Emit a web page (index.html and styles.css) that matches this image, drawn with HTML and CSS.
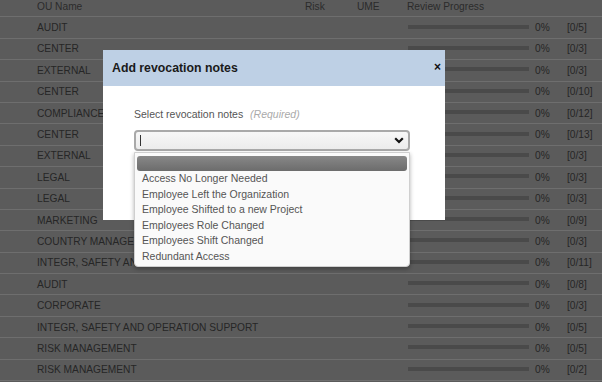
FILE: index.html
```html
<!DOCTYPE html>
<html>
<head>
<meta charset="utf-8">
<link rel="stylesheet" href="styles.css">
</head>
<body>
<div class="page">
  <div class="table">
    <div class="row head"><span>OU Name</span><span>Risk</span><span>UME</span><span>Review Progress</span><span></span><span></span></div>
    <div class="row"><span>AUDIT</span><span></span><span></span><span class="bar"></span><span>0%</span><span>[0/5]</span></div>
    <div class="row"><span>CENTER</span><span></span><span></span><span class="bar"></span><span>0%</span><span>[0/3]</span></div>
    <div class="row"><span>EXTERNAL</span><span></span><span></span><span class="bar"></span><span>0%</span><span>[0/3]</span></div>
    <div class="row"><span>CENTER</span><span></span><span></span><span class="bar"></span><span>0%</span><span>[0/10]</span></div>
    <div class="row"><span>COMPLIANCE</span><span></span><span></span><span class="bar"></span><span>0%</span><span>[0/12]</span></div>
    <div class="row"><span>CENTER</span><span></span><span></span><span class="bar"></span><span>0%</span><span>[0/13]</span></div>
    <div class="row"><span>EXTERNAL</span><span></span><span></span><span class="bar"></span><span>0%</span><span>[0/3]</span></div>
    <div class="row"><span>LEGAL</span><span></span><span></span><span class="bar"></span><span>0%</span><span>[0/3]</span></div>
    <div class="row"><span>LEGAL</span><span></span><span></span><span class="bar"></span><span>0%</span><span>[0/3]</span></div>
    <div class="row"><span>MARKETING</span><span></span><span></span><span class="bar"></span><span>0%</span><span>[0/9]</span></div>
    <div class="row"><span>COUNTRY MANAGEMENT</span><span></span><span></span><span class="bar"></span><span>0%</span><span>[0/3]</span></div>
    <div class="row"><span>INTEGR, SAFETY AND OPERATION SUPPORT</span><span></span><span></span><span class="bar"></span><span>0%</span><span>[0/11]</span></div>
    <div class="row"><span>AUDIT</span><span></span><span></span><span class="bar"></span><span>0%</span><span>[0/8]</span></div>
    <div class="row"><span>CORPORATE</span><span></span><span></span><span class="bar"></span><span>0%</span><span>[0/3]</span></div>
    <div class="row"><span>INTEGR, SAFETY AND OPERATION SUPPORT</span><span></span><span></span><span class="bar"></span><span>0%</span><span>[0/5]</span></div>
    <div class="row"><span>RISK MANAGEMENT</span><span></span><span></span><span class="bar"></span><span>0%</span><span>[0/5]</span></div>
    <div class="row"><span>RISK MANAGEMENT</span><span></span><span></span><span class="bar"></span><span>0%</span><span>[0/2]</span></div>
  </div>

  <div class="modal">
    <div class="modal-head">
      <span class="modal-title">Add revocation notes</span>
      <span class="modal-close">×</span>
    </div>
    <div class="modal-body">
      <div class="label">Select revocation notes <em class="req">(Required)</em></div>
      <div class="select">
        <span class="caret"></span>
        <svg class="chev" width="10" height="7" viewBox="0 0 10 7"><path d="M1.2 1.2 L5 5 L8.8 1.2" fill="none" stroke="#111" stroke-width="2.2"/></svg>
      </div>
      <div class="dropdown">
        <div class="opt-hl"></div>
        <div class="opt">Access No Longer Needed</div>
        <div class="opt">Employee Left the Organization</div>
        <div class="opt">Employee Shifted to a new Project</div>
        <div class="opt">Employees Role Changed</div>
        <div class="opt">Employees Shift Changed</div>
        <div class="opt">Redundant Access</div>
      </div>
    </div>
  </div>
</div>
</body>
</html>
```

FILE: styles.css
```css
* { box-sizing: border-box; }
html, body { margin: 0; padding: 0; }
body {
  width: 602px;
  height: 382px;
  overflow: hidden;
  background: #5b5b5b;
  font-family: "Liberation Sans", Arial, sans-serif;
}
.page {
  position: relative;
  display: flow-root;
  width: 602px;
  height: 382px;
  overflow: hidden;
}
.table { margin-top: -4px; }
.row {
  display: grid;
  grid-template-columns: 268px 52px 50px 128px 32px 1fr;
  align-items: center;
  height: 21.4px;
  padding-left: 37px;
  border-bottom: 1px solid #6e6e6e;
  font-size: 10.2px;
  color: #262626;
  white-space: nowrap;
}
.row.head { color: #2b2b2b; }
.bar {
  display: block;
  width: 121px;
  height: 4px;
  background: #4a4a4a;
  margin-left: 1px;
  margin-top: -2px;
}

.modal {
  position: absolute;
  left: 103px;
  top: 50px;
  width: 342px;
  height: 170px;
  background: #fff;
  display: flex;
  flex-direction: column;
}
.modal-head {
  height: 36px;
  background: #bed0e5;
  display: flex;
  align-items: center;
  justify-content: space-between;
  padding: 0 4px 0 9px;
}
.modal-title {
  font-weight: bold;
  font-size: 12.3px;
  color: #1a1a1a;
}
.modal-close {
  font-weight: bold;
  font-size: 12px;
  color: #111;
  margin-top: -2px;
}
.modal-body {
  position: relative;
  flex: 1;
  padding: 22px 35px 0 31px;
}
.label {
  font-size: 10.5px;
  color: #555;
}
.req {
  color: #aaa;
  margin-left: 4px;
}
.select {
  margin-top: 10px;
  height: 21px;
  width: 276px;
  border: 2px solid #a9a9a9;
  border-radius: 4px;
  background: linear-gradient(#f7f7f7, #ececec);
  display: flex;
  align-items: center;
  justify-content: space-between;
  padding: 0 4px 0 4px;
}
.caret {
  width: 1px;
  height: 11px;
  background: #333;
}
.chev { display: block; }
.dropdown {
  position: absolute;
  left: 31px;
  top: 66px;
  width: 276px;
  height: 115px;
  background: #fafafa;
  border: 1px solid #cfcfcf;
  border-radius: 0 0 4px 4px;
  box-shadow: 0 2px 4px rgba(0,0,0,0.3);
  padding: 3px 2px 0 2px;
}
.opt-hl {
  height: 15px;
  border-radius: 3px;
  background: linear-gradient(#888, #6c6c6c);
}
.opt {
  font-size: 10.5px;
  color: #555;
  height: 15.5px;
  line-height: 15.5px;
  padding-left: 5px;
}
```
